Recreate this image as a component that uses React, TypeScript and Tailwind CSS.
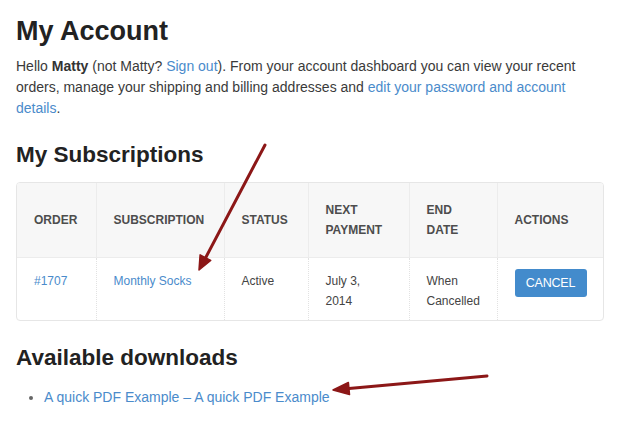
import React from 'react';

const columns = [
    { label: ['Order'], width: 'w-[79px]' },
    { label: ['Subscription'], width: 'w-[128px]' },
    { label: ['Status'], width: 'w-[84px]' },
    { label: ['Next', 'Payment'], width: 'w-[101px]' },
    { label: ['End', 'Date'], width: 'w-[88px]' },
    { label: ['Actions'], width: 'w-[108px]' },
];

const Arrows = () => (
    <svg
        className="absolute left-0 top-0 pointer-events-none"
        width="620"
        height="425"
        viewBox="0 0 620 425"
    >
        <g stroke="#8c1717" strokeWidth="3" strokeLinecap="round" fill="#8c1717">
            <line x1="265" y1="145" x2="205.5" y2="258" />
            <polygon points="199,270 210.7,260.4 200.1,254.8" strokeWidth="1.5" strokeLinejoin="round" />
            <line x1="487" y1="376" x2="349" y2="388.5" />
            <polygon points="333,390 349.5,394.5 348.4,382.5" strokeWidth="1.5" strokeLinejoin="round" />
        </g>
    </svg>
);

export default function App() {
    return (
        <div className="relative w-[620px] h-[425px] bg-white overflow-hidden font-['Liberation_Sans',Arial,sans-serif] text-[#3a3a3a]">
            <div className="px-4 pt-[16px]">
                <h1 className="text-[27px] leading-[30px] font-bold text-[#222]">My Account</h1>

                <p className="mt-[10px] text-[14px] leading-[21px]">
                    Hello <strong className="text-[#333]">Matty</strong> (not Matty?{' '}
                    <a className="text-[#4a8bcb]">Sign out</a>). From your account dashboard you can view your recent
                    orders, manage your shipping and billing addresses and{' '}
                    <a className="text-[#4a8bcb]">edit your password and account details</a>.
                </p>

                <h2 className="mt-[23px] text-[22.5px] leading-[25px] font-bold text-[#222]">My Subscriptions</h2>

                <div className="mt-[15px] border border-[#e6e6e6] rounded-[4px] overflow-hidden">
                    <table className="w-full table-fixed border-collapse">
                        <thead>
                            <tr className="bg-[#f7f7f7] border-b border-[#ececec]">
                                {columns.map((col, idx) => (
                                    <th
                                        key={idx}
                                        className={`${col.width} ${idx > 0 ? 'border-l border-[#ececec]' : ''} h-[74px] pl-[17px] pr-2 text-left align-middle text-[12px] leading-5 font-bold uppercase text-[#4d4d4d]`}
                                    >
                                        {col.label.map((line) => (
                                            <div key={line}>{line}</div>
                                        ))}
                                    </th>
                                ))}
                            </tr>
                        </thead>
                        <tbody>
                            <tr className="text-[12px] leading-5 text-[#444]">
                                <td className="h-[63px] pl-[17px] pr-2 pt-[13px] align-top">
                                    <a className="text-[#4a8bcb]">#1707</a>
                                </td>
                                <td className="border-l border-dotted border-[#e2e2e2] pl-[17px] pr-2 pt-[13px] align-top">
                                    <a className="text-[#4a8bcb]">Monthly Socks</a>
                                </td>
                                <td className="border-l border-dotted border-[#e2e2e2] pl-[17px] pr-2 pt-[13px] align-top">
                                    Active
                                </td>
                                <td className="border-l border-dotted border-[#e2e2e2] pl-[17px] pr-2 pt-[13px] align-top">
                                    July 3,
                                    <br />
                                    2014
                                </td>
                                <td className="border-l border-dotted border-[#e2e2e2] pl-[17px] pr-2 pt-[13px] align-top">
                                    When
                                    <br />
                                    Cancelled
                                </td>
                                <td className="border-l border-dotted border-[#e2e2e2] pl-[17px] pr-2 pt-[11px] align-top">
                                    <button className="w-[72px] h-[28px] rounded-[3px] bg-[#438bcc] text-white text-[12.5px] uppercase tracking-[-0.2px]">
                                        Cancel
                                    </button>
                                </td>
                            </tr>
                        </tbody>
                    </table>
                </div>

                <h2 className="mt-[24px] text-[22.5px] leading-[25px] font-bold text-[#222]">Available downloads</h2>

                <ul className="mt-[17px] list-disc pl-7 text-[14px] leading-5 marker:text-[#666]">
                    <li>
                        <a className="text-[#4a8bcb]">A quick PDF Example – A quick PDF Example</a>
                    </li>
                </ul>
            </div>

            <Arrows />
        </div>
    );
}
